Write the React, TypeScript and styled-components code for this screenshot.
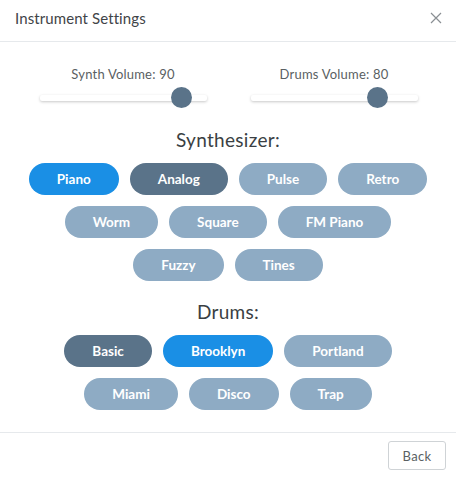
import React from "react";
import styled, { createGlobalStyle } from "styled-components";

const Global = createGlobalStyle`
  html, body { margin: 0; padding: 0; background: #fff; }
  body { font-family: Lato, "Noto Sans", sans-serif; }
  * { box-sizing: border-box; }
`;

const Modal = styled.div`
  width: 456px;
  height: 478px;
  display: flex;
  flex-direction: column;
  background: #fff;
`;

const Header = styled.div`
  height: 42px;
  display: flex;
  align-items: center;
  justify-content: space-between;
  padding: 0 14px 6px 15px;
  border-bottom: 1px solid #e6e9ec;
`;

const Title = styled.h1`
  margin: 0;
  font-size: 15px;
  font-weight: 400;
  color: #3f4448;
  letter-spacing: 0.1px;
`;

const Close = styled.button`
  border: 0;
  background: none;
  padding: 0;
  width: 12px;
  height: 12px;
  display: flex;
  color: #8a8f93;
`;

const Body = styled.div`
  flex: 1;
  display: flex;
  flex-direction: column;
  align-items: center;
  padding-top: 24px;
  border-bottom: 1px solid #e6e9ec;
`;

const Sliders = styled.div`
  display: grid;
  grid-template-columns: 167px 167px;
  column-gap: 44px;
  margin-left: 1px;
`;

const SliderBox = styled.div`
  display: flex;
  flex-direction: column;
  align-items: center;
`;

const SliderLabel = styled.div`
  font-size: 13px;
  color: #5a5f63;
  line-height: 16px;
  letter-spacing: 0.2px;
`;

const Track = styled.div`
  position: relative;
  width: 167px;
  height: 6px;
  margin-top: 13px;
  background: #fff;
  border-radius: 2px;
  box-shadow: 0 1px 3px rgba(0, 0, 0, 0.22);
`;

const Thumb = styled.div`
  position: absolute;
  top: 50%;
  width: 21px;
  height: 21px;
  margin-left: -10.5px;
  margin-top: -11px;
  border-radius: 50%;
  background: #5a7389;
`;

const Heading = styled.h2`
  margin: 0;
  font-size: 19px;
  font-weight: 400;
  color: #3a3f43;
  line-height: 24px;
  letter-spacing: 0.3px;
`;

const Group = styled.div<{ $top: number }>`
  display: flex;
  flex-direction: column;
  align-items: center;
  gap: 11px;
  margin-top: ${(p) => p.$top}px;
`;

const Row = styled.div`
  display: flex;
  gap: 11px;
  justify-content: center;
`;

const Pill = styled.button<{ $kind: "blue" | "dark" | "light" }>`
  height: 32px;
  padding: 0 28px;
  border: 0;
  border-radius: 16px;
  font-family: Lato, "Noto Sans", sans-serif;
  font-size: 13.5px;
  font-weight: 700;
  color: #fff;
  background: ${(p) =>
    p.$kind === "blue" ? "#1a8fe5" : p.$kind === "dark" ? "#5a7389" : "#8eabc4"};
`;

const Footer = styled.div`
  height: 45px;
  display: flex;
  justify-content: flex-end;
  align-items: center;
  padding: 0 10px 0 0;
`;

const Back = styled.button`
  height: 29px;
  width: 58px;
  border: 1px solid #cfd3d6;
  border-radius: 3px;
  background: #fff;
  font-family: Lato, "Noto Sans", sans-serif;
  font-size: 13px;
  color: #5a5f63;
  letter-spacing: 0.3px;
`;

type Kind = "blue" | "dark" | "light";

const synthRows: [string, Kind][][] = [
  [["Piano", "blue"], ["Analog", "dark"], ["Pulse", "light"], ["Retro", "light"]],
  [["Worm", "light"], ["Square", "light"], ["FM Piano", "light"]],
  [["Fuzzy", "light"], ["Tines", "light"]],
];

const drumRows: [string, Kind][][] = [
  [["Basic", "dark"], ["Brooklyn", "blue"], ["Portland", "light"]],
  [["Miami", "light"], ["Disco", "light"], ["Trap", "light"]],
];

const Slider = ({ label, value }: { label: string; value: number }) => {
  const pos = 10.5 + (146 * value) / 100;
  return (
    <SliderBox>
      <SliderLabel>
        {label}: {value}
      </SliderLabel>
      <Track>
        <Thumb style={{ left: `${pos}px` }} />
      </Track>
    </SliderBox>
  );
};

export default function App() {
  return (
    <>
      <Global />
      <Modal>
        <Header>
          <Title>Instrument Settings</Title>
          <Close aria-label="close">
            <svg width="12" height="12" viewBox="0 0 12 12">
              <path d="M1 1L11 11M11 1L1 11" stroke="currentColor" strokeWidth="1.2" />
            </svg>
          </Close>
        </Header>
        <Body>
          <Sliders>
            <Slider label="Synth Volume" value={90} />
            <Slider label="Drums Volume" value={80} />
          </Sliders>
          <Group $top={27}>
            <Heading>Synthesizer:</Heading>
            {synthRows.map((r, i) => (
              <Row key={i}>
                {r.map(([n, k]) => (
                  <Pill key={n} $kind={k}>
                    {n}
                  </Pill>
                ))}
              </Row>
            ))}
          </Group>
          <Group $top={19}>
            <Heading>Drums:</Heading>
            {drumRows.map((r, i) => (
              <Row key={i}>
                {r.map(([n, k]) => (
                  <Pill key={n} $kind={k}>
                    {n}
                  </Pill>
                ))}
              </Row>
            ))}
          </Group>
        </Body>
        <Footer>
          <Back>Back</Back>
        </Footer>
      </Modal>
    </>
  );
}
